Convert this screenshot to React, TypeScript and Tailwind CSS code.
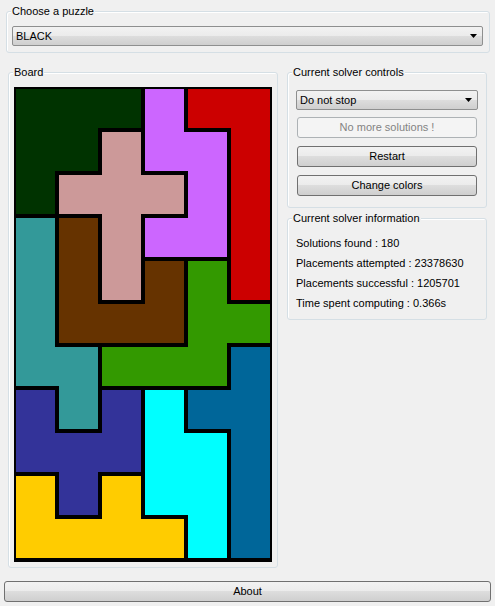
import React from 'react'

const COLORS: Record<string, string> = {
  D: '#003300',
  V: '#cc66ff',
  R: '#cc0000',
  P: '#cc9999',
  T: '#339999',
  B: '#663300',
  G: '#339900',
  U: '#006699',
  N: '#333399',
  C: '#00ffff',
  Y: '#ffcc00',
}

const GRID = [
  'DDDVRR',
  'DDPVVR',
  'DPPPVR',
  'TBPVVR',
  'TBPBGR',
  'TBBBGG',
  'TTGGGU',
  'NTNCUU',
  'NNNCCU',
  'YNYCCU',
  'YYYYCU',
]

const CELL = 43

function Board() {
  const rows = GRID.length
  const cols = GRID[0].length
  const cells: React.ReactNode[] = []
  const lines: React.ReactNode[] = []

  for (let r = 0; r < rows; r++) {
    for (let c = 0; c < cols; c++) {
      const k = GRID[r][c]
      const x = c * CELL
      const y = r * CELL
      cells.push(<rect key={`c${r}-${c}`} x={x} y={y} width={CELL} height={CELL} fill={COLORS[k]} />)
      if (r === 0) lines.push(<line key={`t${r}-${c}`} x1={x} y1={y} x2={x + CELL} y2={y} />)
      if (c === 0) lines.push(<line key={`l${r}-${c}`} x1={x} y1={y} x2={x} y2={y + CELL} />)
      if (c === cols - 1 || GRID[r][c + 1] !== k)
        lines.push(<line key={`r${r}-${c}`} x1={x + CELL} y1={y} x2={x + CELL} y2={y + CELL} />)
      if (r === rows - 1 || GRID[r + 1][c] !== k)
        lines.push(<line key={`b${r}-${c}`} x1={x} y1={y + CELL} x2={x + CELL} y2={y + CELL} />)
    }
  }

  return (
    <svg width={258} height={475} viewBox="0 0 258 475" className="block">
      {cells}
      <g stroke="#000" strokeWidth={4} strokeLinecap="square">
        {lines}
      </g>
    </svg>
  )
}

function Group({ title, className, children }: { title: string; className?: string; children: React.ReactNode }) {
  return (
    <div className={`relative rounded-[3px] border border-[#d5dfe5] shadow-[inset_1px_1px_0_#ffffff] ${className ?? ''}`}>
      <span className="absolute left-[4px] top-[-8px] bg-[#f0f0f0] px-[1px] leading-[14px] text-black">{title}</span>
      {children}
    </div>
  )
}

function Combo({ value, className }: { value: string; className?: string }) {
  return (
    <div
      className={`flex items-center justify-between rounded-[2px] border border-[#8e8f8f] bg-[linear-gradient(#f2f2f2_0%,#ebebeb_50%,#dddddd_50%,#cfcfcf_100%)] pl-[3px] pr-[5px] text-black ${className ?? ''}`}
    >
      <span>{value}</span>
      <svg width="7" height="4" viewBox="0 0 7 4">
        <path d="M0 0h7L3.5 4z" fill="#000" />
      </svg>
    </div>
  )
}

function Button({ label, disabled, className }: { label: string; disabled?: boolean; className?: string }) {
  return (
    <button
      disabled={disabled}
      className={`flex items-center justify-center rounded-[3px] border ${
        disabled
          ? 'border-[#adb2b5] bg-[#f4f4f4] text-[#838383]'
          : 'border-[#707070] bg-[linear-gradient(#f2f2f2_0%,#ebebeb_50%,#dddddd_50%,#cfcfcf_100%)] text-black'
      } ${className ?? ''}`}
    >
      {label}
    </button>
  )
}

export default function App() {
  return (
    <div className="w-[495px] h-[606px] overflow-hidden bg-[#f0f0f0] text-[11px] font-['Liberation_Sans',Arial,sans-serif]">
      <div className="pt-[11px]">
        <Group title="Choose a puzzle" className="ml-[6px] w-[484px] h-[42px] pt-[14px] pl-[5px]">
          <Combo value="BLACK" className="w-[471px] h-[20px]" />
        </Group>
      </div>

      <div className="mt-[19px] flex items-start">
        <Group title="Board" className="ml-[8px] w-[270px] pt-[14px] pb-[5px] pl-[5px]">
          <Board />
        </Group>

        <div className="ml-[9px] w-[200px] flex flex-col">
          <Group title="Current solver controls" className="h-[136px] pt-[17px] pl-[8px] flex flex-col">
            <Combo value="Do not stop" className="w-[182px] h-[20px]" />
            <div className="pl-[1px] flex flex-col gap-[8px] mt-[7px]">
              <Button label="No more solutions !" disabled className="w-[180px] h-[21px]" />
              <Button label="Restart" className="w-[180px] h-[21px]" />
              <Button label="Change colors" className="w-[180px] h-[21px]" />
            </div>
          </Group>

          <Group title="Current solver information" className="mt-[10px] h-[102px] pt-[14px] pl-[8px] text-black">
            <div className="leading-[20px]">Solutions found : 180</div>
            <div className="leading-[20px]">Placements attempted : 23378630</div>
            <div className="leading-[20px]">Placements successful : 1205701</div>
            <div className="leading-[20px]">Time spent computing : 0.366s</div>
          </Group>
        </div>
      </div>

      <div className="mt-[13px] pl-[4px]">
        <Button label="About" className="w-[487px] h-[21px]" />
      </div>
    </div>
  )
}
